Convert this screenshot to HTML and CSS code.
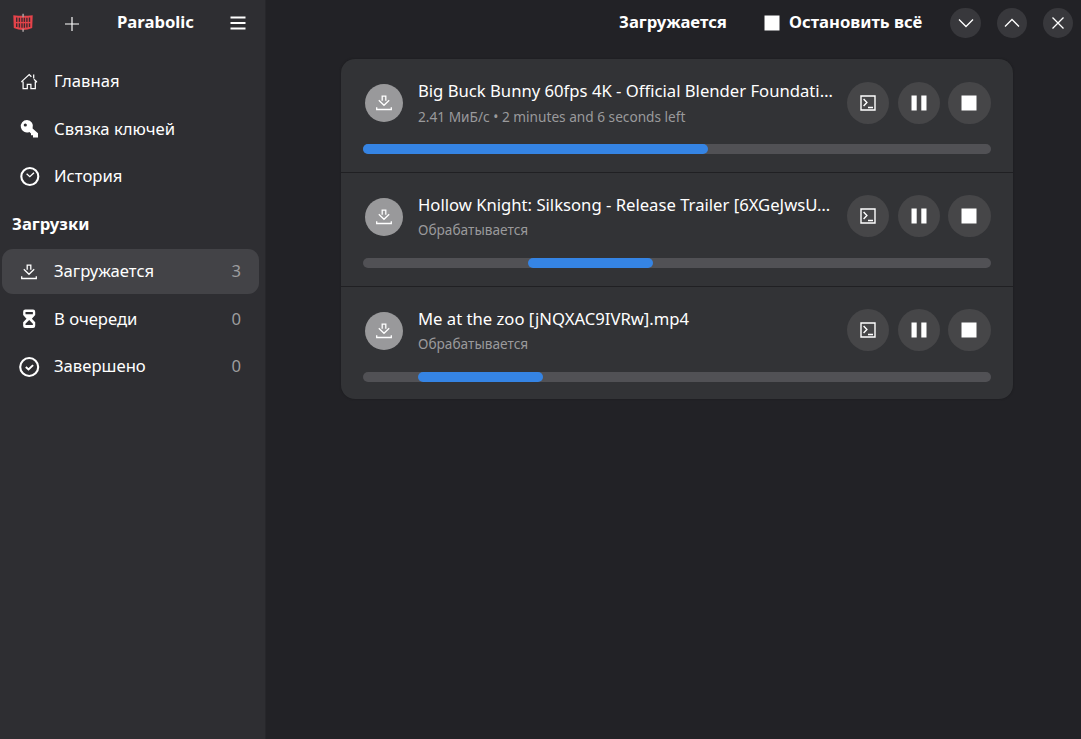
FILE: index.html
```html
<!DOCTYPE html>
<html lang="ru">
<head>
<meta charset="utf-8">
<title>Parabolic</title>
<link rel="stylesheet" href="styles.css">
</head>
<body>
<svg class="defs" width="0" height="0">
  <symbol id="download" viewBox="0 0 16 16"><path d="M6.2 5.8V1.2h3.6v4.6M2.8 5.3l5.2 5 5.2-5M.7 12.3v2.2h14.6v-2.2" fill="none" stroke="#fff" stroke-width="1.3"/></symbol>
  <symbol id="terminal" viewBox="0 0 16 16"><path d="M1 1h14v14H1zM3.6 4l3.3 3.5L3.6 11M8 12.5h5" fill="none" stroke="#fff" stroke-width="1.4"/></symbol>
  <symbol id="pause" viewBox="0 0 16 16"><path d="M.5.5h5.2v15H.5zM10.3.5h5.2v15h-5.2z" fill="#fff"/></symbol>
  <symbol id="stop" viewBox="0 0 16 16"><path d="M.5.5h15v15H.5z" fill="#fff"/></symbol>
</svg>
<div class="window">
  <aside class="sidebar">
    <header class="side-header">
      <svg class="logo" viewBox="0 0 20 20"><path d="M.3 2.3Q10 3.4 19.7 2.3L19.2 15Q10 18.8.8 15z" fill="#e5434a"/><path d="M3.7 4.6v9.4M6.4 4.8v9.8M9 4.8v10M11.4 4.8v10M13.9 4.8v9.8M16.5 4.6v9.4" stroke="#3d292f" stroke-width="1.4"/><path d="M1.5 9.6h17" stroke="#e5434a" stroke-width="1.4"/><path d="M9.3.8h1.6v3.4H9.3zM9.3 15.8h1.6v2.9H9.3z" fill="#a49b9b"/></svg>
      <svg class="plus" viewBox="0 0 16 16"><path d="M8 1v14M1 8h14" stroke="#fff" stroke-width="1.15"/></svg>
      <span class="app-name">Parabolic</span>
      <svg class="menu" viewBox="0 0 16 16"><path d="M.5 2.5h15M.5 8h15M.5 13.5h15" stroke="#fff" stroke-width="2.2"/></svg>
    </header>
    <nav class="nav">
      <div class="nav-item"><svg class="nav-icon" viewBox="0 0 18 18"><path d="M1.8 9.3V8.4L9.2 1.5 11.4 3.7M13.9 6.3l2.6 2.2v.9M13.7 1.4v4M3.1 8.5v7h4.2v-4.2h3.6v4.2h4.4v-7" fill="none" stroke="#fff" stroke-width="1.25"/></svg><span>Главная</span></div>
      <div class="nav-item"><svg class="nav-icon" viewBox="0 0 18 18"><path fill-rule="evenodd" d="M7 0a6.2 6.2 0 1 0 2.4 11.9L11 13.4v1.8h2v2.3h5v-4.3l-5.4-4.8A6.2 6.2 0 0 0 7 0zM5.3 3.4a1.6 1.6 0 1 1 0 3.2 1.6 1.6 0 0 1 0-3.2z" fill="#fff"/></svg><span>Связка ключей</span></div>
      <div class="nav-item"><svg class="nav-icon" viewBox="0 0 18 18"><circle cx="9.8" cy="8.5" r="8.5" fill="none" stroke="#fff" stroke-width="2.1"/><path d="m6.6 5.8 3.2 2.9 4.2-4" fill="none" stroke="#fff" stroke-width="1.3"/></svg><span>История</span></div>
      <h2 class="nav-heading">Загрузки</h2>
      <div class="nav-item selected"><svg class="nav-icon download-icon"><use href="#download"/></svg><span>Загружается</span><span class="count">3</span></div>
      <div class="nav-item"><svg class="nav-icon" viewBox="0 0 18 20"><path fill-rule="evenodd" d="M4.9-.5h8.6Q15.9-.5 15.9 2v3.6L12.2 9.7l3.7 4v3.8q0 2.5-2.4 2.5H4.9q-2.4 0-2.4-2.5v-3.8l3.7-4-3.7-4.1V2Q2.5-.5 4.9-.5zM5.1 2.1v2.7h8.2V2.1zM9.2 11 5.1 15.2v1.6h8.2v-1.6z" fill="#fff"/></svg><span>В очереди</span><span class="count">0</span></div>
      <div class="nav-item"><svg class="nav-icon" viewBox="0 0 18 18"><circle cx="9.2" cy="9" r="9" fill="none" stroke="#fff" stroke-width="2.1"/><path d="m5.8 9.1 2.7 2.4 4.6-4.4" fill="none" stroke="#fff" stroke-width="2"/></svg><span>Завершено</span><span class="count">0</span></div>
    </nav>
  </aside>
  <main class="main">
    <header class="main-header">
      <span class="page-title">Загружается</span>
      <svg class="stop-icon"><use href="#stop"/></svg>
      <span class="stop-label">Остановить всё</span>
      <div class="controls">
        <button class="control"><svg viewBox="0 0 16 16"><path d="m1 4.5 7 7 7-7"/></svg></button>
        <button class="control"><svg viewBox="0 0 16 16"><path d="m1 11.5 7-7 7 7"/></svg></button>
        <button class="control"><svg viewBox="0 0 16 16"><path d="m2.5 2.5 11 11m0-11-11 11"/></svg></button>
      </div>
    </header>
    <section class="card">
      <article class="row">
        <div class="row-top">
          <div class="avatar"><svg><use href="#download"/></svg></div>
          <div class="info"><div class="title">Big Buck Bunny 60fps 4K - Official Blender Foundati…</div><div class="status">2.41 МиБ/с • 2 minutes and 6 seconds left</div></div>
          <div class="actions"><button><svg><use href="#terminal"/></svg></button><button><svg><use href="#pause"/></svg></button><button><svg><use href="#stop"/></svg></button></div>
        </div>
        <div class="track"><div class="bar" style="width:345px"></div></div>
      </article>
      <article class="row">
        <div class="row-top">
          <div class="avatar"><svg><use href="#download"/></svg></div>
          <div class="info"><div class="title">Hollow Knight: Silksong - Release Trailer [6XGeJwsU…</div><div class="status">Обрабатывается</div></div>
          <div class="actions"><button><svg><use href="#terminal"/></svg></button><button><svg><use href="#pause"/></svg></button><button><svg><use href="#stop"/></svg></button></div>
        </div>
        <div class="track"><div class="bar" style="width:125px;margin-left:165px"></div></div>
      </article>
      <article class="row">
        <div class="row-top">
          <div class="avatar"><svg><use href="#download"/></svg></div>
          <div class="info"><div class="title">Me at the zoo [jNQXAC9IVRw].mp4</div><div class="status">Обрабатывается</div></div>
          <div class="actions"><button><svg><use href="#terminal"/></svg></button><button><svg><use href="#pause"/></svg></button><button><svg><use href="#stop"/></svg></button></div>
        </div>
        <div class="track"><div class="bar" style="width:125px;margin-left:55px"></div></div>
      </article>
    </section>
  </main>
</div>
</body>
</html>
```
FILE: styles.css
```css
* { box-sizing: border-box; }
body { margin: 0; background: #222226; color: #fff; font: 16.66px/22px "Noto Sans", sans-serif; }
svg { display: block; flex: none; overflow: visible; }
.defs { position: absolute; }
button { border: 0; padding: 0; display: flex; align-items: center; justify-content: center; }
.window { display: flex; height: 739px; overflow: hidden; }
.sidebar { width: 266px; flex: none; background: #2e2e32; border-right: 1px solid #27272b; }
.side-header { height: 46px; display: flex; align-items: center; padding-left: 13px; }
.logo { width: 20px; height: 20px; margin-top: -1px; }
.plus { width: 16px; height: 16px; margin: 1px 0 0 31px; }
.app-name { width: 77px; margin: -2px 0 0 37px; font-weight: 700; white-space: nowrap; }
.menu { width: 16px; height: 16px; margin-left: 36px; }
.nav { display: flex; flex-direction: column; gap: 2.5px; padding: 13px 6px 0 2px; }
.nav-item { height: 45px; display: flex; align-items: center; border-radius: 11px; padding: 0 18px; }
.nav-item span { position: relative; top: -.5px; white-space: nowrap; }
.nav-icon { width: 18px; height: 18px; margin-right: 16px; }
.download-icon { width: 16px; height: 16px; margin: 0 17px 0 1px; }
.nav-item.selected { background: #434347; }
.nav-item .count { margin-left: auto; color: #9d9d9f; }
.nav-heading { height: 45px; margin: 0 0 0 10px; font-size: 16.66px; line-height: 44px; font-weight: 700; }
.main { flex: 1; }
.main-header { height: 59px; display: flex; align-items: flex-start; padding: 8px 8px 0 353px; font-weight: 700; }
.page-title { width: 109px; margin-top: 3px; white-space: nowrap; }
.stop-icon { width: 16px; height: 16px; margin: 7px 0 0 35.5px; }
.stop-label { margin: 3px 0 0 9.5px; white-space: nowrap; }
.controls { display: flex; gap: 16px; margin-left: auto; }
.control { width: 30.2px; height: 30.2px; border-radius: 50%; background: #38383c; }
.control svg { width: 16px; height: 16px; fill: none; stroke: #fff; stroke-width: 1.3; }
.card { width: 672px; height: 340px; margin-left: 75px; background: #323336; border-radius: 14px; overflow: hidden; box-shadow: 0 0 2px #19191c; }
.row { height: 113px; padding: 22.5px 22px 0; }
.row + .row { height: 114px; border-top: 1px solid #202023; }
.row + .row { padding-top: 22px; }
.row-top { display: flex; height: 43px; }
.avatar { width: 38px; height: 38px; margin: 2.5px 14.6px 0 2.4px; border-radius: 50%; background: #99999b; display: flex; align-items: center; justify-content: center; flex: none; }
.avatar svg, .actions svg { width: 16px; height: 16px; }
.info { width: 429px; flex: none; white-space: nowrap; }
.title { margin-top: -2.5px; line-height: 24px; }
.status { margin-top: 3.5px; color: #9a9a9c; font-size: 13.67px; line-height: 20px; }
.actions { display: flex; gap: 8.2px; }
.actions button { width: 42.4px; height: 42.4px; border-radius: 50%; background: #464648; }
.track { height: 10px; margin-top: 19.5px; border-radius: 5px; background: #515155; }
.bar { height: 10px; border-radius: 5px; background: #3584e4; }
```
